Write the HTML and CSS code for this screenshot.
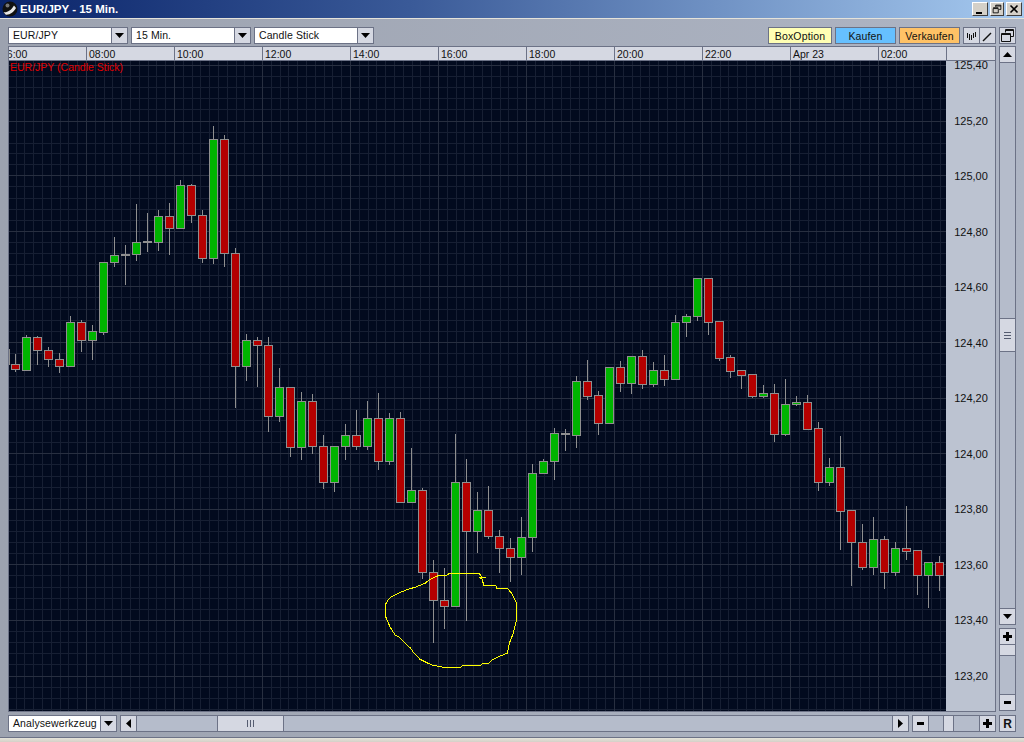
FILE: index.html
```html
<!DOCTYPE html>
<html lang="de">
<head>
<meta charset="utf-8">
<title>EUR/JPY - 15 Min.</title>
<link rel="stylesheet" href="styles.css">
</head>
<body>
<header class="titlebar">
  <svg class="app-icon" width="16" height="16" viewBox="0 0 16 16"><circle cx="8" cy="8" r="7.5" fill="#111"/><path d="M1.5 11C4 12 9 10 12 4.5L14 7C12 11 7 14.5 3.5 13.5Z" fill="#e8e8e8"/><circle cx="5.5" cy="4.5" r="2" fill="#777"/></svg>
  <span class="title-text">EUR/JPY - 15 Min.</span>
  <div class="win-buttons">
    <button class="win-btn"><svg width="14" height="12" viewBox="0 0 14 12"><path d="M3 9h6v2H3z" fill="#000"/></svg></button>
    <button class="win-btn win-btn-mid"><svg width="14" height="12" viewBox="0 0 14 12"><path d="M5.5 3.5v-2h6v5h-2M2.5 5.5h6v5h-6zM2.5 4.5h6M5.5 2.5h6" fill="none" stroke="#000"/></svg></button>
    <button class="win-btn win-btn-close"><svg width="14" height="12" viewBox="0 0 14 12"><path d="M3.5 2.5l7 7M10.5 2.5l-7 7" fill="none" stroke="#000" stroke-width="1.6"/></svg></button>
  </div>
</header>
<div class="window">
  <div class="toolbar">
    <div class="select select-first"><span class="select-value">EUR/JPY</span><span class="btn arrow-btn"><svg width="9" height="5" viewBox="0 0 9 5"><path d="M0 0h9L4.5 5z"/></svg></span></div>
    <div class="select"><span class="select-value">15 Min.</span><span class="btn arrow-btn"><svg width="9" height="5" viewBox="0 0 9 5"><path d="M0 0h9L4.5 5z"/></svg></span></div>
    <div class="select"><span class="select-value">Candle Stick</span><span class="btn arrow-btn"><svg width="9" height="5" viewBox="0 0 9 5"><path d="M0 0h9L4.5 5z"/></svg></span></div>
    <div class="actions">
      <button class="action action-box">BoxOption</button>
      <button class="action action-buy">Kaufen</button>
      <button class="action action-sell">Verkaufen</button>
      <div class="tool-pair">
        <span class="btn tool"><svg width="13" height="12" viewBox="0 0 13 12"><path d="M2.5 3v5M4.5 4v6M6.5 5v5M8.5 3v5M10.5 2v5" fill="none" stroke="#111"/></svg></span>
        <span class="btn tool"><svg width="13" height="12" viewBox="0 0 13 12"><path d="M2 11L10 3" fill="none" stroke="#111" stroke-width="1.4"/></svg></span>
      </div>
      <span class="btn side-btn"><svg width="13" height="13" viewBox="0 0 13 13"><path d="M4.5 3.5v-3h8v7h-3M.5 4.5h9v8h-9zM.5 5.5h9M4.5 1.5h8" fill="none" stroke="#111"/></svg></span>
    </div>
  </div>
  <div class="main">
    <div class="plot">
      <div class="time-axis">
        <span class="tick tick-first"><span class="tick-clip">06:00</span></span>
        <span class="tick">08:00</span>
        <span class="tick">10:00</span>
        <span class="tick">12:00</span>
        <span class="tick">14:00</span>
        <span class="tick">16:00</span>
        <span class="tick">18:00</span>
        <span class="tick">20:00</span>
        <span class="tick">22:00</span>
        <span class="tick">Apr 23</span>
        <span class="tick tick-last">02:00</span>
      </div>
      <div class="plot-body">
        <div class="chart">
          <span class="chart-label">EUR/JPY (Candle Stick)</span>
          <svg class="chart-svg" width="937" height="650" viewBox="9 61 937 650">
            <defs>
              <pattern id="minor" patternUnits="userSpaceOnUse" x="86" y="61" width="88" height="650">
                <path class="grid-minor" d="M9.5 0v650M18.5 0v650M26.5 0v650M35.5 0v650M44.5 0v650M53.5 0v650M62.5 0v650M70.5 0v650M79.5 0v650"/>
              </pattern>
            </defs>
            <rect x="9" y="61" width="937" height="650" fill="url(#minor)"/>
            <path class="grid-minor" d="M9 76.5h937M9 87.5h937M9 98.5h937M9 109.5h937M9 132.5h937M9 143.5h937M9 153.5h937M9 164.5h937M9 186.5h937M9 198.5h937M9 209.5h937M9 220.5h937M9 242.5h937M9 253.5h937M9 264.5h937M9 275.5h937M9 297.5h937M9 309.5h937M9 320.5h937M9 331.5h937M9 353.5h937M9 364.5h937M9 376.5h937M9 387.5h937M9 409.5h937M9 420.5h937M9 431.5h937M9 442.5h937M9 464.5h937M9 476.5h937M9 487.5h937M9 498.5h937M9 520.5h937M9 531.5h937M9 542.5h937M9 553.5h937M9 575.5h937M9 587.5h937M9 598.5h937M9 609.5h937M9 631.5h937M9 642.5h937M9 653.5h937M9 664.5h937M9 687.5h937M9 698.5h937M9 709.5h937"/>
            <path class="grid-major" d="M9 65.5h937M9 121.5h937M9 175.5h937M9 231.5h937M9 286.5h937M9 342.5h937M9 398.5h937M9 453.5h937M9 509.5h937M9 564.5h937M9 620.5h937M9 676.5h937M86.5 61v650M174.5 61v650M262.5 61v650M350.5 61v650M438.5 61v650M526.5 61v650M614.5 61v650M702.5 61v650M790.5 61v650M878.5 61v650"/>
            <path class="wick" d="M9.5 349V365M15.5 354V372M26.5 335V370M37.5 336V365M48.5 347V367M59.5 353V373M70.5 316V367M81.5 320V352M92.5 325V360M103.5 262V335M114.5 237V267M125.5 245V285M136.5 204V261M147.5 213V252M158.5 210V251M169.5 203V255M180.5 180V228M191.5 184V223M202.5 210V263M213.5 126V264M224.5 135V267M235.5 248V408M246.5 334V381M257.5 337V387M268.5 337V432M279.5 368V422M290.5 387V457M301.5 392V460M312.5 394V454M323.5 435V489M334.5 446V492M345.5 424V460M356.5 410V450M367.5 401V450M378.5 393V470M389.5 413V465M400.5 412V502M411.5 448V502M422.5 488V579M433.5 560V643M444.5 568V629M455.5 434V606M466.5 459V621M477.5 492V553M488.5 486V539M499.5 530V573M510.5 538V582M521.5 517V575M532.5 464V552M543.5 459V473M554.5 428V480M565.5 429V451M576.5 376V448M587.5 360V400M598.5 391V435M609.5 367V423M620.5 361V392M631.5 356V394M642.5 350V389M653.5 362V387M664.5 355V386M675.5 315V379M686.5 314V337M697.5 278V321M708.5 278V335M719.5 321V361M730.5 355V378M741.5 370V389M752.5 374V398M763.5 385V398M774.5 384V442M785.5 379V436M796.5 396V406M807.5 395V429M818.5 422V491M829.5 458V486M840.5 436V550M851.5 510V586M862.5 524V570M873.5 517V575M884.5 536V589M895.5 542V576M906.5 506V560M917.5 550V595M928.5 562V608M939.5 556V591"/>
            <path class="doji" d="M121 254h9v2h-9zM143 241h9v2h-9zM561 433h9v2h-9z"/>
            <path class="body-up" d="M22.5 337.5h8v33h-8zM66.5 322.5h8v44h-8zM88.5 331.5h8v9h-8zM99.5 262.5h8v70h-8zM110.5 255.5h8v7h-8zM132.5 242.5h8v12h-8zM154.5 216.5h8v26h-8zM176.5 185.5h8v43h-8zM209.5 139.5h8v119h-8zM242.5 340.5h8v26h-8zM275.5 387.5h8v29h-8zM297.5 401.5h8v46h-8zM330.5 446.5h8v36h-8zM341.5 435.5h8v11h-8zM363.5 418.5h8v28h-8zM385.5 418.5h8v43h-8zM407.5 490.5h8v12h-8zM451.5 482.5h8v124h-8zM473.5 510.5h8v21h-8zM517.5 537.5h8v20h-8zM528.5 473.5h8v64h-8zM539.5 461.5h8v12h-8zM550.5 433.5h8v28h-8zM572.5 381.5h8v54h-8zM605.5 367.5h8v56h-8zM627.5 356.5h8v27h-8zM649.5 370.5h8v14h-8zM671.5 322.5h8v57h-8zM682.5 316.5h8v6h-8zM693.5 278.5h8v38h-8zM759.5 393.5h8v3h-8zM781.5 404.5h8v30h-8zM792.5 402.5h8v2h-8zM825.5 467.5h8v15h-8zM869.5 539.5h8v28h-8zM891.5 548.5h8v24h-8zM924.5 562.5h8v13h-8z"/>
            <path class="body-down" d="M11.5 364.5h8v5h-8zM33.5 337.5h8v13h-8zM44.5 350.5h8v9h-8zM55.5 359.5h8v7h-8zM77.5 322.5h8v18h-8zM165.5 216.5h8v12h-8zM187.5 185.5h8v30h-8zM198.5 215.5h8v43h-8zM220.5 139.5h8v114h-8zM231.5 253.5h8v113h-8zM253.5 340.5h8v5h-8zM264.5 345.5h8v71h-8zM286.5 387.5h8v60h-8zM308.5 401.5h8v45h-8zM319.5 446.5h8v36h-8zM352.5 435.5h8v11h-8zM374.5 418.5h8v43h-8zM396.5 418.5h8v84h-8zM418.5 490.5h8v82h-8zM429.5 572.5h8v28h-8zM440.5 600.5h8v6h-8zM462.5 482.5h8v49h-8zM484.5 510.5h8v26h-8zM495.5 536.5h8v12h-8zM506.5 548.5h8v9h-8zM583.5 381.5h8v15h-8zM594.5 395.5h8v28h-8zM616.5 367.5h8v16h-8zM638.5 356.5h8v28h-8zM660.5 370.5h8v9h-8zM704.5 278.5h8v44h-8zM715.5 321.5h8v37h-8zM726.5 357.5h8v14h-8zM737.5 370.5h8v5h-8zM748.5 374.5h8v22h-8zM770.5 393.5h8v41h-8zM803.5 402.5h8v27h-8zM814.5 428.5h8v54h-8zM836.5 467.5h8v44h-8zM847.5 510.5h8v32h-8zM858.5 542.5h8v25h-8zM880.5 539.5h8v33h-8zM902.5 548.5h8v3h-8zM913.5 550.5h8v25h-8zM935.5 562.5h8v13h-8z"/>
            <polyline class="drawing" points="486,577.3 481.7,577.3 479.3,573.3 449.3,573.3 447.3,575 438.3,575.7 430,579.3 425,583.3 415,587.3 406.7,589.7 398.3,593.3 391.7,596.7 389.3,598.3 385.7,604 385.7,616.7 390,626.7 395,635 400,637.7 405,643.3 410.7,648.3 413.3,652.3 420,659.3 431.7,665 444,667.3 460.7,667.3 462.7,665.3 481,665.3 482.3,663.3 489,663.3 492.3,660 500,656 507.3,653.3 509.3,643.3 513.3,633.3 516,621.7 516,601.7 511.7,593.3 507.3,588.3 496.7,588.3 496,585.7 483.3,585.7 482.7,579.3 479.3,577.3"/>
          </svg>
        </div>
        <div class="price-axis">
          <span>125,40</span><span>125,20</span><span>125,00</span><span>124,80</span><span>124,60</span><span>124,40</span><span>124,20</span><span>124,00</span><span>123,80</span><span>123,60</span><span>123,40</span><span>123,20</span>
        </div>
      </div>
    </div>
    <div class="v-controls">
      <div class="v-scroll">
        <span class="btn v-btn"><svg width="9" height="5" viewBox="0 0 9 5"><path d="M0 5h9L4.5 0z"/></svg></span>
        <div class="v-track"><span class="btn v-thumb"><svg width="9" height="7" viewBox="0 0 9 7"><path d="M1 .5h7M1 3.5h7M1 6.5h7" stroke="#555c70" fill="none"/></svg></span></div>
        <span class="btn v-btn"><svg width="9" height="5" viewBox="0 0 9 5"><path d="M0 0h9L4.5 5z"/></svg></span>
      </div>
      <div class="v-zoom">
        <span class="btn v-btn"><svg width="9" height="9" viewBox="0 0 9 9"><path d="M3 0h3v3h3v3H6v3H3V6H0V3h3z"/></svg></span>
        <span class="btn v-zoom-thumb"></span>
        <div class="v-zoom-track"></div>
        <span class="btn v-btn"><svg width="9" height="3" viewBox="0 0 9 3"><path d="M1 0h7v3H1z"/></svg></span>
      </div>
    </div>
  </div>
  <div class="bottom">
    <div class="select select-tool"><span class="select-value">Analysewerkzeug</span><span class="btn arrow-btn"><svg width="9" height="5" viewBox="0 0 9 5"><path d="M0 0h9L4.5 5z"/></svg></span></div>
    <div class="h-scroll">
      <span class="btn h-btn"><svg width="5" height="9" viewBox="0 0 5 9"><path d="M5 0v9L0 4.5z"/></svg></span>
      <div class="h-track"><span class="btn h-thumb"><svg width="7" height="9" viewBox="0 0 7 9"><path d="M.5 1v7M3.5 1v7M6.5 1v7" stroke="#555c70" fill="none"/></svg></span></div>
      <span class="btn h-btn"><svg width="5" height="9" viewBox="0 0 5 9"><path d="M0 0v9l5-4.5z"/></svg></span>
    </div>
    <div class="h-zoom">
      <span class="btn h-btn"><svg width="9" height="3" viewBox="0 0 9 3"><path d="M1 0h7v3H1z"/></svg></span>
      <div class="h-zoom-track"><span class="btn h-zoom-thumb"></span></div>
      <span class="btn h-btn"><svg width="9" height="9" viewBox="0 0 9 9"><path d="M3 0h3v3h3v3H6v3H3V6H0V3h3z"/></svg></span>
    </div>
    <span class="btn reset">R</span>
  </div>
</div>
<div class="foot"></div>
</body>
</html>
```

FILE: styles.css
```css
* { box-sizing: border-box; }
html, body { margin: 0; padding: 0; }
body {
  width: 1024px;
  height: 742px;
  overflow: hidden;
  display: flex;
  flex-direction: column;
  font-family: "Liberation Sans", Arial, sans-serif;
  font-size: 10.5px;
  color: #111;
  background: #d4d0c8;
}
svg { display: block; }

.titlebar {
  height: 18px;
  flex: none;
  display: flex;
  align-items: center;
  padding: 0 2px;
  background: linear-gradient(90deg, #0a246a 0%, #3a5a98 40%, #a6caf0 100%);
}
.app-icon { margin-right: 2px; }
.title-text { color: #fff; font-weight: bold; font-size: 11.5px; }
.win-buttons { margin-left: auto; display: flex; }
.win-btn {
  width: 16px;
  height: 14px;
  padding: 0;
  display: flex;
  align-items: center;
  justify-content: center;
  background: #d4d0c8;
  border: 1px solid;
  border-color: #fff #404040 #404040 #fff;
}
.win-btn-mid { margin-left: 2px; width: 14px; }
.win-btn-close { margin-left: 2px; }

.window {
  flex: none;
  height: 719px;
  border-top: 1px solid #e4e2da;
  padding: 8px 8px 5px;
  display: flex;
  flex-direction: column;
  background: linear-gradient(90deg, #9ca2af, #aeb5c4);
}

.btn {
  display: flex;
  align-items: center;
  justify-content: center;
  background: #d5d8e2;
  border: 1px solid #6c7286;
  flex: none;
}

.toolbar { display: flex; height: 17px; margin-bottom: 2px; flex: none; }
.select {
  width: 120px;
  height: 17px;
  display: flex;
  background: #fff;
  border: 1px solid #6c7286;
  margin-left: 3px;
  flex: none;
}
.select-first { margin-left: 0; }
.select-value { flex: 1; padding-left: 4px; line-height: 15px; letter-spacing: 0.1px; white-space: nowrap; overflow: hidden; }
.arrow-btn { width: 16px; height: 15px; border-width: 0 0 0 1px; }

.actions { margin-left: auto; display: flex; }
.action {
  width: 64px;
  height: 17px;
  padding: 0;
  margin-right: 3px;
  font: 10.5px "Liberation Sans", Arial, sans-serif;
  letter-spacing: 0.15px;
  color: #111;
  border: 1px solid #6c7286;
}
.action-buy, .action-sell { width: 61px; }
.action-box { background: #ffffb4; }
.action-buy { background: #66c0ff; }
.action-sell { background: #ffc266; }
.tool-pair { display: flex; width: 33px; height: 17px; margin-right: 3px; }
.tool { width: 17px; height: 17px; }
.tool + .tool { width: 16px; border-left: 0; }
.side-btn { width: 17px; height: 17px; }

.main { flex: 1; display: flex; min-height: 0; }
.plot {
  width: 988px;
  display: flex;
  flex-direction: column;
  border: 1px solid #6c7286;
}
.time-axis {
  height: 14px;
  flex: none;
  display: flex;
  background: #d5d8e2;
  border-bottom: 1px solid #6c7286;
  line-height: 14px;
}
.tick {
  width: 88px;
  padding-left: 2px;
  border-right: 1px solid #6c7286;
  white-space: nowrap;
  overflow: hidden;
}
.tick-first { width: 78px; padding-left: 0; }
.tick-clip { display: block; margin-left: -8px; }
.tick-last { width: 68px; }

.plot-body { flex: 1; display: flex; min-height: 0; }
.chart { position: relative; width: 937px; height: 650px; background: #020a1e; flex: none; }
.chart-label {
  position: absolute;
  left: 1px;
  top: 1px;
  color: #e00000;
  line-height: 11px;
}
.chart-svg { shape-rendering: crispEdges; }
.grid-minor { stroke: #171f33; fill: none; }
.grid-major { stroke: #282f40; fill: none; }
.wick { stroke: #8f8f8f; fill: none; }
.doji { fill: #8f8f8f; }
.body-up { fill: #00b400; stroke: #8f8f8f; }
.body-down { fill: #b40000; stroke: #8f8f8f; }
.drawing { fill: none; stroke: #ffff00; }

.price-axis {
  flex: 1;
  display: flex;
  flex-direction: column;
  justify-content: space-between;
  align-items: center;
  padding: 0 0 30px 1px;
  background: #bcc3d1;
  font-size: 11px;
  line-height: 9px;
}

.v-controls { width: 17px; margin-left: 3px; display: flex; flex-direction: column; flex: none; }
.v-scroll { height: 579px; display: flex; flex-direction: column; flex: none; }
.v-btn { width: 17px; height: 17px; }
.v-track {
  flex: 1;
  display: flex;
  flex-direction: column;
  padding-top: 255px;
  background: #b5bccb;
  border-left: 1px solid #6c7286;
  border-right: 1px solid #6c7286;
}
.v-thumb { width: 15px; height: 34px; border-width: 1px 0; }
.v-zoom { margin-top: 3px; height: 83px; display: flex; flex-direction: column; flex: none; }
.v-zoom-thumb { width: 17px; height: 11px; border-top: 0; }
.v-zoom-track {
  flex: 1;
  background: #b5bccb;
  border-left: 1px solid #6c7286;
  border-right: 1px solid #6c7286;
}

.bottom { display: flex; height: 17px; margin-top: 3px; flex: none; }
.select-tool { width: 109px; margin-left: 0; }
.h-scroll { width: 789px; margin-left: 3px; display: flex; flex: none; }
.h-btn { width: 17px; height: 17px; }
.h-track {
  flex: 1;
  display: flex;
  padding-left: 80px;
  background: #b5bccb;
  border-top: 1px solid #6c7286;
  border-bottom: 1px solid #6c7286;
}
.h-thumb { width: 67px; height: 15px; border-width: 0 1px; }
.h-zoom { width: 84px; margin-left: 3px; display: flex; flex: none; }
.h-zoom-track {
  flex: 1;
  display: flex;
  padding-left: 14px;
  background: #b5bccb;
  border-top: 1px solid #6c7286;
  border-bottom: 1px solid #6c7286;
}
.h-zoom-thumb { width: 11px; height: 15px; border-width: 0 1px; }
.reset { width: 17px; height: 17px; margin-left: 3px; font-weight: bold; font-size: 12px; }

.foot { flex: 1; background: linear-gradient(180deg, #6c7286 0, #6c7286 1px, #e6e4da 1px, #d4d0c8 100%); }
```
